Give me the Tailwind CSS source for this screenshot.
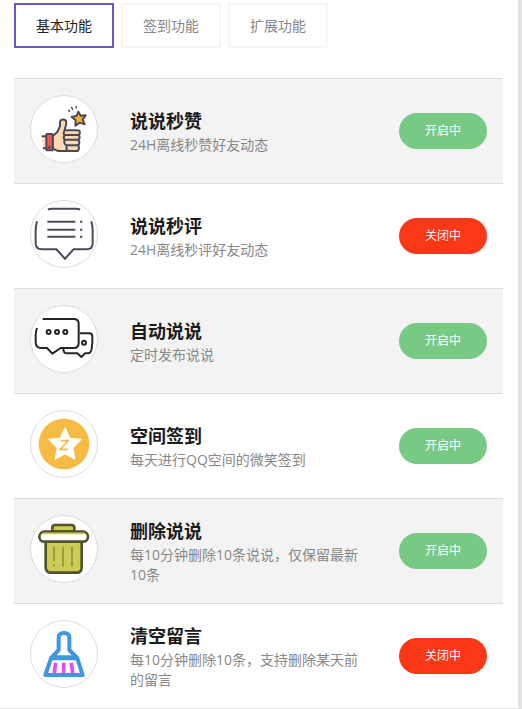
<!DOCTYPE html>
<html lang="zh-CN">
<head>
    <meta charset="UTF-8">
    <meta name="viewport" content="width=device-width, initial-scale=1.0">
    <title>功能列表</title>
    <script src="https://cdn.jsdelivr.net/npm/@tailwindcss/browser@4"></script>
</head>
<body class="bg-[#e3e3e3] font-['Open_Sans','Noto_Sans_CJK_SC',sans-serif] text-sm text-[#888]">
    <main class="mr-1 bg-white pl-3.5 pr-[15px] pt-[3px]">
        <!-- Tabs -->
        <nav class="mb-[30px] flex gap-[7px]">
            <button class="h-[45px] w-[100px] border-2 border-[#6659d0] text-[#222]">基本功能</button>
            <button class="h-[45px] w-[100px] border-2 border-[#f6f6f6]">签到功能</button>
            <button class="h-[45px] w-[100px] border-2 border-[#f6f6f6]">扩展功能</button>
        </nav>

        <!-- Feature list -->
        <ul>
            <li class="flex min-h-[105px] items-center border-t border-[#dcdcdc] bg-[#f3f3f3] px-4">
                <!-- Thumbs up -->
                <svg class="mt-4 size-[68px] shrink-0 self-start rounded-full border border-[#dcdcdc] bg-white" viewBox="33 33 198 198" fill="none" stroke="#4b4858" stroke-width="6" stroke-linecap="round" stroke-linejoin="round">
                    <path d="M66 153h12v38H69" fill="#fbd9b1" stroke="none"/>
                    <path d="M67 154h11M71 190h8"/>
                    <path d="M98 153l14-12 8-17v-13c0-10 19-10 19 2 0 8-5 17-5 23h38c10 0 10 14 0 14 9 0 9 14 0 14 8 0 8 16 0 17 7 1 6 17-2 17h-55l-17-7z" fill="#fbd9b1"/>
                    <path d="M134 137c-5 5-4 12 2 13h36M172 150h-35c-8 1-7 14 0 14h35M137 164c-7 3-5 15 3 17h32M142 181c-5 4-3 15 4 17"/>
                    <rect x="79" y="147" width="19" height="49" rx="2" fill="#ee5b56"/>
                    <path d="M88 183v8M84 187h8" stroke-width="3"/>
                    <path d="M175 80l7 12 15-1-9 12 6 15-15-5-13 9 1-16-12-10 15-4z" fill="#f9ae2b"/>
                    <path d="M146 76l3 3M155 67l3 6M169 64l-1 5" stroke-width="4"/>
                </svg>
                <div class="ml-8 min-w-0 flex-1">
                    <h3 class="text-lg leading-7 font-bold text-[#1b1b1b]">说说秒赞</h3>
                    <p class="leading-5">24H离线秒赞好友动态</p>
                </div>
                <button class="ml-8 h-9 w-[88px] shrink-0 rounded-full bg-[#78c983] text-xs text-white">开启中</button>
            </li>

            <li class="flex min-h-[105px] items-center border-t border-[#dcdcdc] bg-white px-4">
                <!-- Comment bubble -->
                <svg class="mt-4 size-[68px] shrink-0 self-start rounded-full border border-[#dcdcdc] bg-white" viewBox="33 33 198 198" fill="none" stroke="#4b4a58" stroke-width="6">
                    <path d="M84 59q4-3 12-3h72q8 0 12 3"/>
                    <path d="M51 94q-4 14-4 30v36q0 18 19 18h43l26 28 26-28h39q18 0 18-18v-36q0-16-4-30"/>
                    <path d="M82 95h84M82 119h84M82 140h84M180 95h7M180 119h7M180 140h7"/>
                </svg>
                <div class="ml-8 min-w-0 flex-1">
                    <h3 class="text-lg leading-7 font-bold text-[#1b1b1b]">说说秒评</h3>
                    <p class="leading-5">24H离线秒评好友动态</p>
                </div>
                <button class="ml-8 h-9 w-[88px] shrink-0 rounded-full bg-[#fa3716] text-xs text-white">关闭中</button>
            </li>

            <li class="flex min-h-[105px] items-center border-t border-[#dcdcdc] bg-[#f3f3f3] px-4">
                <!-- Two chat bubbles -->
                <svg class="mt-4 size-[68px] shrink-0 self-start rounded-full border border-[#dcdcdc] bg-white" viewBox="33 33 198 198" fill="none" stroke="#252527" stroke-width="6" stroke-linejoin="round">
                    <path d="M179 115h29q9 0 9 9v24M216 148q1 27-13 27h-8l-11 11-12-11h-31q-11 0-11-14"/>
                    <path d="M68 72h93q15 0 15 14v58q0 15-15 15h-39l-25 17-16-17H63q-16 0-16-18v-20q0-12 4-22" fill="#fff"/>
                    <circle cx="86" cy="111" r="6"/>
                    <circle cx="111" cy="111" r="6"/>
                    <circle cx="136" cy="111" r="6"/>
                    <circle cx="192" cy="143" r="6"/>
                </svg>
                <div class="ml-8 min-w-0 flex-1">
                    <h3 class="text-lg leading-7 font-bold text-[#1b1b1b]">自动说说</h3>
                    <p class="leading-5">定时发布说说</p>
                </div>
                <button class="ml-8 h-9 w-[88px] shrink-0 rounded-full bg-[#78c983] text-xs text-white">开启中</button>
            </li>

            <li class="flex min-h-[105px] items-center border-t border-[#dcdcdc] bg-white px-4">
                <!-- Star badge -->
                <svg class="mt-4 size-[68px] shrink-0 self-start rounded-full border border-[#dcdcdc] bg-white" viewBox="33 33 198 198">
                    <circle cx="132" cy="132" r="76" fill="#f6bb42"/>
                    <path d="M135 84l14 31 34 3-25 25 6 34-29-16-29 16 6-34-25-25 34-3z" fill="#fff" stroke="#fff" stroke-width="4" stroke-linejoin="round"/>
                    <text x="133" y="150" text-anchor="middle" font-family="DejaVu Sans" font-size="40" font-style="italic" fill="#f6bb42" stroke="#f6bb42" stroke-width="1">Z</text>
                </svg>
                <div class="ml-8 min-w-0 flex-1">
                    <h3 class="text-lg leading-7 font-bold text-[#1b1b1b]">空间签到</h3>
                    <p class="leading-5">每天进行QQ空间的微笑签到</p>
                </div>
                <button class="ml-8 h-9 w-[88px] shrink-0 rounded-full bg-[#78c983] text-xs text-white">开启中</button>
            </li>

            <li class="flex min-h-[105px] items-center border-t border-[#dcdcdc] bg-[#f3f3f3] px-4">
                <!-- Trash can -->
                <svg class="mt-4 size-[68px] shrink-0 self-start rounded-full border border-[#dcdcdc] bg-white" viewBox="33 33 198 198" fill="#cbcb55" stroke="#53522c" stroke-width="8" stroke-linejoin="round">
                    <path d="M97 80V68q0-8 9-8h48q9 0 9 8v12z"/>
                    <path d="M77 108v77q0 18 16 18h78q14 0 14-18v-77z"/>
                    <rect x="58" y="80" width="146" height="30" rx="15" fill="#fff"/>
                    <path d="M68 85h126" stroke="#cbcb55" stroke-width="5"/>
                    <path d="M102 125v43M102 178v7M129 125v60M156 125v60" stroke-width="4" stroke="#85843e"/>
                </svg>
                <div class="ml-8 min-w-0 flex-1">
                    <h3 class="text-lg leading-7 font-bold text-[#1b1b1b]">删除说说</h3>
                    <p class="leading-5">每10分钟删除10条说说，仅保留最新10条</p>
                </div>
                <button class="ml-8 h-9 w-[88px] shrink-0 rounded-full bg-[#78c983] text-xs text-white">开启中</button>
            </li>

            <li class="flex min-h-[105px] items-center border-t border-[#dcdcdc] bg-white px-4">
                <!-- Brush -->
                <svg class="mt-4 size-[68px] shrink-0 self-start rounded-full border border-[#dcdcdc] bg-white" viewBox="33 33 198 198" fill="none" stroke="#3f97df" stroke-width="12" stroke-linejoin="round">
                    <path d="M95 142l21-22V83q0-14 16-14t16 14v37l22 22z"/>
                    <path d="M93 145h79l16 50H76z"/>
                    <path d="M107 158l-4 31M131 158v31M154 158l4 31" stroke="#e84cf0" stroke-width="11"/>
                </svg>
                <div class="ml-8 min-w-0 flex-1">
                    <h3 class="text-lg leading-7 font-bold text-[#1b1b1b]">清空留言</h3>
                    <p class="leading-5">每10分钟删除10条，支持删除某天前的留言</p>
                </div>
                <button class="ml-8 h-9 w-[88px] shrink-0 rounded-full bg-[#fa3716] text-xs text-white">关闭中</button>
            </li>
        </ul>
    </main>
</body>
</html>
